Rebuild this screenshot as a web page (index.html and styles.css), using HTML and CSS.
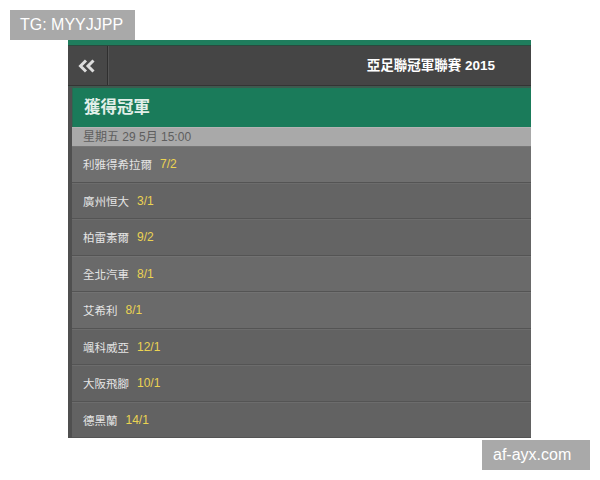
FILE: index.html
```html
<!DOCTYPE html>
<html lang="zh-Hant">
<head>
    <meta charset="UTF-8">
    <meta name="viewport" content="width=device-width, initial-scale=1.0">
    <title>亞足聯冠軍聯賽 2015</title>
    <link rel="stylesheet" href="styles.css">
</head>
<body>
    <div class="tag tag-top">TG: MYYJJPP</div>

    <div class="screen">
        <div class="top-strip"></div>
        <div class="header">
            <div class="back">
                <svg width="18" height="14" viewBox="0 0 18 14">
                    <path d="M8 1.5 L2.5 7 L8 12.5 M15.5 1.5 L10 7 L15.5 12.5" fill="none" stroke="#dcdcdc" stroke-width="3" stroke-linejoin="miter"/>
                </svg>
            </div>
            <div class="title">亞足聯冠軍聯賽 2015</div>
        </div>
        <div class="market">
            <div class="market-name">獲得冠軍</div>
            <div class="date-bar">星期五 29 5月 15:00</div>
            <div class="row light"><span class="team">利雅得希拉爾</span><span class="odds">7/2</span></div>
            <div class="row"><span class="team">廣州恒大</span><span class="odds">3/1</span></div>
            <div class="row"><span class="team">柏雷素爾</span><span class="odds">9/2</span></div>
            <div class="row mid"><span class="team">全北汽車</span><span class="odds">8/1</span></div>
            <div class="row mid"><span class="team">艾希利</span><span class="odds">8/1</span></div>
            <div class="row dark"><span class="team">颯科威亞</span><span class="odds">12/1</span></div>
            <div class="row dark"><span class="team">大阪飛腳</span><span class="odds">10/1</span></div>
            <div class="row dark"><span class="team">德黑蘭</span><span class="odds">14/1</span></div>
        </div>
    </div>

    <div class="tag tag-bottom">af-ayx.com</div>
</body>
</html>
```

FILE: styles.css
```css
body {
    margin: 0;
    padding: 0;
    background-color: #ffffff;
    font-family: "Liberation Sans", "Noto Sans CJK TC", sans-serif;
    position: relative;
    width: 600px;
    height: 480px;
    overflow: hidden;
}
.tag {
    position: absolute;
    background-color: #a9a9a9;
    color: #ffffff;
    font-size: 16px;
    height: 30px;
    line-height: 30px;
    padding: 0 10px;
    box-sizing: border-box;
}
.tag-top {
    left: 10px;
    top: 10px;
    width: 125px;
}
.tag-bottom {
    left: 482px;
    top: 440px;
    width: 108px;
    padding-left: 11px;
}
.screen {
    margin: 40px 0 0 68px;
    width: 463px;
    background-color: #4d4d4d;
}
.top-strip {
    height: 5px;
    background-color: #1f7d5d;
    border-bottom: 1px solid #2a4a3e;
}
.header {
    display: flex;
    height: 39px;
    background-color: #454545;
    border-bottom: 1px solid #343434;
}
.back {
    width: 39px;
    display: flex;
    align-items: center;
    justify-content: center;
    border-right: 1px solid #2f2f2f;
    box-shadow: 1px 0 0 #555555;
    background-color: #474747;
}
.back svg {
    margin-left: -2px;
}
.title {
    flex-grow: 1;
    text-align: right;
    padding-right: 36px;
    line-height: 39px;
    color: #ffffff;
    font-weight: bold;
    font-size: 13.5px;
}
.market {
    border-left: 4px solid #4f4f4f;
    border-top: 2px solid #3e5a4f;
}
.market-name {
    height: 39px;
    line-height: 38px;
    background-color: #1a7b5a;
    color: #e2efe9;
    font-size: 16.5px;
    font-weight: bold;
    padding-left: 11px;
    border-left: 1px solid #2a6a52;
}
.date-bar {
    height: 19px;
    line-height: 19px;
    background-color: #a9a9a9;
    color: #5e5e5e;
    font-size: 12px;
    padding-left: 11px;
    border-top: 1px solid #b4b4b4;
    box-sizing: border-box;
}
.row {
    display: flex;
    align-items: center;
    height: 36.5px;
    box-sizing: border-box;
    padding-left: 11px;
    background-color: #646464;
    border-top: 1px solid #6c6c6c;
    border-bottom: 1px solid #545454;
    font-size: 11.5px;
}
.row.light {
    background-color: #6f6f6f;
    border-top-color: #777777;
}
.row.mid {
    background-color: #6a6a6a;
    border-top-color: #727272;
}
.row.dark {
    background-color: #626262;
}
.team {
    color: #e4e4e4;
}
.odds {
    color: #ebd352;
    margin-left: 8px;
    font-size: 12px;
}
```
